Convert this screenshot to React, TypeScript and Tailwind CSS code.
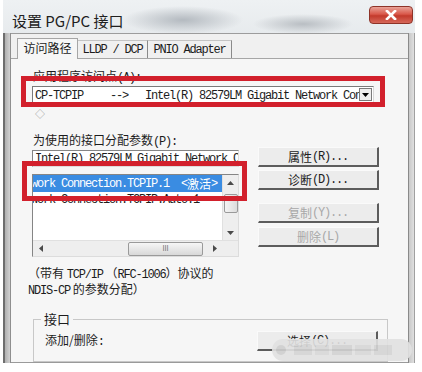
import React from "react";

function M({ children, className = "" }: { children: React.ReactNode; className?: string }) {
  return (
    <span className={"font-mono text-[12px] tracking-[-1.2px] " + className}>
      {children}
    </span>
  );
}

function Btn({ children, disabled = false, className = "" }: { children: React.ReactNode; disabled?: boolean; className?: string }) {
  return (
    <div
      className={
        "w-[121px] h-[20px] flex items-center justify-center border-t border-l border-t-[#fafafa] border-l-[#fafafa] border-r-2 border-b-2 border-r-[#5c5c5c] border-b-[#5c5c5c] bg-[#ececec] " +
        (disabled ? "text-[#a8a8a8] " : "text-[#1c1c1c] ") +
        className
      }
    >
      {children}
    </div>
  );
}

export default function App() {
  return (
    <div className="w-[422px] h-[372px] bg-white overflow-hidden relative text-[#1c1c1c] font-['Noto_Sans_CJK_SC'] text-[12px] leading-[14px]">
      {/* window */}
      <div className="ml-[3px] w-[412px] h-[363px] flex flex-col bg-[linear-gradient(180deg,#eef1f3_0%,#cfd5da_40%,#c3c9ce_100%)]">
        {/* title bar */}
        <div className="h-[33px] flex items-start justify-between shrink-0 bg-[radial-gradient(ellipse_60px_14px_at_180px_20px,#b4bac0,transparent),radial-gradient(ellipse_50px_10px_at_300px_24px,#b9bec3,transparent)]">
          <span className="ml-[9px] mt-[12px] text-[15px] leading-[18px] text-[#202020]">设置 PG/PC 接口</span>
          <div className="mt-[6px] mr-[2px] w-[44px] h-[18px] rounded-[4px] border border-[#8e3328] bg-[linear-gradient(180deg,#e9a398_0%,#d9584a_45%,#c33a2c_55%,#d6685a_100%)] flex items-center justify-center">
            <svg width="12" height="10" viewBox="0 0 12 10">
              <path d="M2 1 L10 9 M10 1 L2 9" stroke="#ffffff" strokeWidth="2.6" strokeLinecap="square" />
            </svg>
          </div>
        </div>
        {/* body */}
        <div className="flex-1 flex">
          {/* left frame */}
          <div className="w-[8px] border-l-2 border-l-[#6e6e6e] border-r border-r-[#8e8e8e] bg-[linear-gradient(90deg,#b0b0b0,#d2d2d2)]" />
          {/* client */}
          <div className="w-[397px] flex flex-col bg-[#f0f0f0] border-t border-t-[#9c9c9c] border-b border-b-[#9a9a9a]">
            {/* tabs */}
            <div className="h-[24px] flex items-end pl-[6px] shrink-0">
              <div className="w-[61px] h-[21px] border-l border-t border-r border-[#a6a6a6] bg-[#f6f6f6] flex items-center justify-center pb-[2px] -mb-px relative z-10">
                <span className="text-[12px]">访问路径</span>
              </div>
              <div className="w-[70px] h-[18px] border-t border-r border-[#8a8a8a] border-t-[#c4c4c4] flex items-center justify-center">
                <M>LLDP / DCP</M>
              </div>
              <div className="w-[84px] h-[18px] border-t border-r border-[#8a8a8a] border-t-[#c4c4c4] flex items-center justify-center">
                <M>PNIO Adapter</M>
              </div>
            </div>
            {/* panel */}
            <div className="flex-1 bg-[#f6f6f6] border-t border-[#a6a6a6] pl-[22px] flex flex-col">
              <div className="mt-[10px] h-[14px]">
                应用程序访问点<M>(A):</M>
              </div>
              <div className="mt-[3px] -ml-px w-[342px] h-[17px] border border-[#7a7a7a] border-r-[#d8d8d8] border-b-[#d8d8d8] bg-white flex items-center">
                <div className="flex-1 flex items-center pl-[2px] overflow-hidden whitespace-nowrap">
                  <span className="w-[75px] shrink-0"><M>CP-TCPIP</M></span>
                  <span className="w-[35px] shrink-0"><M>--&gt;</M></span>
                  <span className="overflow-hidden"><M>Intel(R) 82579LM Gigabit Network Con</M></span>
                </div>
                <div className="w-[13px] h-[13px] mr-[1px] border border-[#7a7a7a] bg-[#eeeeee] flex items-center justify-center shrink-0">
                  <svg width="7" height="4" viewBox="0 0 7 4"><path d="M0 0 L7 0 L3.5 4 Z" fill="#000" /></svg>
                </div>
              </div>
              <div className="mt-[4px] h-[14px] pl-[2px] text-[10px] text-[#9a9a9a]">◇</div>
              <div className="mt-[12px] h-[14px]">
                为使用的接口分配参数<M>(P):</M>
              </div>
              {/* row */}
              <div className="flex">
                <div className="-ml-px w-[207px] flex flex-col">
                  <div className="mt-[3px] h-[17px] border border-[#858585] border-r-[#dcdcdc] border-b-[#dcdcdc] bg-white overflow-hidden whitespace-nowrap pl-[2px] flex items-center">
                    <M>Intel(R) 82579LM Gigabit Network C</M>
                  </div>
                  <div className="mt-[7px] h-[83px] border border-[#858585] border-r-[#dcdcdc] border-b-[#dcdcdc] bg-white flex flex-col">
                    <div className="flex-1 flex">
                      <div className="flex-1 overflow-hidden whitespace-nowrap">
                        <div className="h-[17px] bg-[#3a8ce2] text-white flex items-center">
                          <M className="-ml-[2px] whitespace-pre">work Connection.TCPIP.1  </M>
                          <M>&lt;</M>
                          <span>激活</span>
                          <M>&gt;</M>
                        </div>
                        <div className="h-[15px] flex items-center">
                          <M className="-ml-[2px]">work Connection.TCPIP.Auto.1</M>
                        </div>
                      </div>
                      {/* vscroll */}
                      <div className="w-[16px] bg-[#eeeeee] border-l border-[#e0e0e0] flex flex-col items-center">
                        <div className="h-[16px] w-full flex items-center justify-center">
                          <svg width="7" height="4" viewBox="0 0 7 4"><path d="M0 4 L7 4 L3.5 0 Z" fill="#4a4a4a" /></svg>
                        </div>
                        <div className="mt-[3px] w-[14px] h-[19px] border border-[#9a9a9a] rounded-[2px] bg-[linear-gradient(90deg,#f4f4f4,#dcdcdc)]" />
                        <div className="flex-1" />
                        <div className="h-[14px] w-full flex items-center justify-center">
                          <svg width="7" height="4" viewBox="0 0 7 4"><path d="M0 0 L7 0 L3.5 4 Z" fill="#4a4a4a" /></svg>
                        </div>
                      </div>
                    </div>
                    {/* hscroll */}
                    <div className="h-[16px] flex bg-[#eeeeee] border-t border-[#e0e0e0]">
                      <div className="flex-1 flex items-center">
                        <div className="w-[16px] flex items-center justify-center">
                          <svg width="4" height="7" viewBox="0 0 4 7"><path d="M4 0 L4 7 L0 3.5 Z" fill="#4a4a4a" /></svg>
                        </div>
                        <div className="ml-[79px] w-[75px] h-[14px] border border-[#9a9a9a] rounded-[2px] bg-[linear-gradient(180deg,#f6f6f6,#d8d8d8)] flex items-center justify-center">
                          <span className="text-[7px] leading-[7px] text-[#666]">III</span>
                        </div>
                        <div className="flex-1" />
                        <div className="w-[14px] flex items-center justify-center">
                          <svg width="4" height="7" viewBox="0 0 4 7"><path d="M0 0 L0 7 L4 3.5 Z" fill="#4a4a4a" /></svg>
                        </div>
                      </div>
                      <div className="w-[16px] bg-[#eeeeee]" />
                    </div>
                  </div>
                </div>
                <div className="ml-[19px] flex flex-col">
                  <Btn>
                    属性<M>(R)...</M>
                  </Btn>
                  <Btn className="mt-[3px]">
                    诊断<M>(D)...</M>
                  </Btn>
                  <Btn disabled className="mt-[13px]">
                    复制<M>(Y)...</M>
                  </Btn>
                  <Btn disabled className="mt-[4px]">
                    删除<M>(L)</M>
                  </Btn>
                </div>
              </div>
              {/* note */}
              <div className="mt-[9px] -ml-[5px] leading-[14px] whitespace-nowrap">
                <div>
                  （带有 <M>TCP/IP</M> （<M>RFC-1006</M>）协议的
                </div>
                <div>
                  <M>NDIS-CP</M> 的参数分配）
                </div>
              </div>
              {/* group box */}
              <fieldset className="mt-[14px] w-[355px] h-[50px] border border-[#c8c8c8] pl-[11px] pr-[9px]">
                <legend className="ml-[-4px] px-[3px] text-[13px] leading-[14px]">接口</legend>
                <div className="flex items-center justify-between mt-[5px]">
                  <span>
                    添加/删除<M>:</M>
                  </span>
                  <Btn>
                    选择<M>(C)...</M>
                  </Btn>
                </div>
              </fieldset>
            </div>
          </div>
          {/* right frame */}
          <div className="w-[7px] border-l border-l-[#8a8a8a] bg-[linear-gradient(90deg,#c8c8c8,#e0e0e0)] border-r border-r-[#a0a0a0]" />
        </div>
      </div>

      {/* red annotation boxes */}
      <div className="absolute left-[21px] top-[76px] w-[364px] h-[31px] border-[5px] border-[#d2202c]" />
      <div className="absolute left-[22px] top-[161px] w-[225px] h-[40px] border-[5px] border-[#d2202c]" />

      {/* watermark */}
      <div className="absolute left-[272px] top-[339px] w-[140px] h-[22px] rounded-full bg-[#e2e2e2] opacity-90 flex items-center pl-[4px]">
        <div className="w-[10px] h-[10px] rounded-full bg-[#cfcfcf]" />
        <div className="ml-[8px] flex gap-[3px]">
          <div className="w-[18px] h-[10px] bg-[#d4d4d4]" />
          <div className="w-[14px] h-[10px] bg-[#d8d8d8]" />
          <div className="w-[20px] h-[10px] bg-[#d2d2d2]" />
          <div className="w-[16px] h-[10px] bg-[#d8d8d8]" />
          <div className="w-[18px] h-[10px] bg-[#d4d4d4]" />
        </div>
      </div>
    </div>
  );
}
